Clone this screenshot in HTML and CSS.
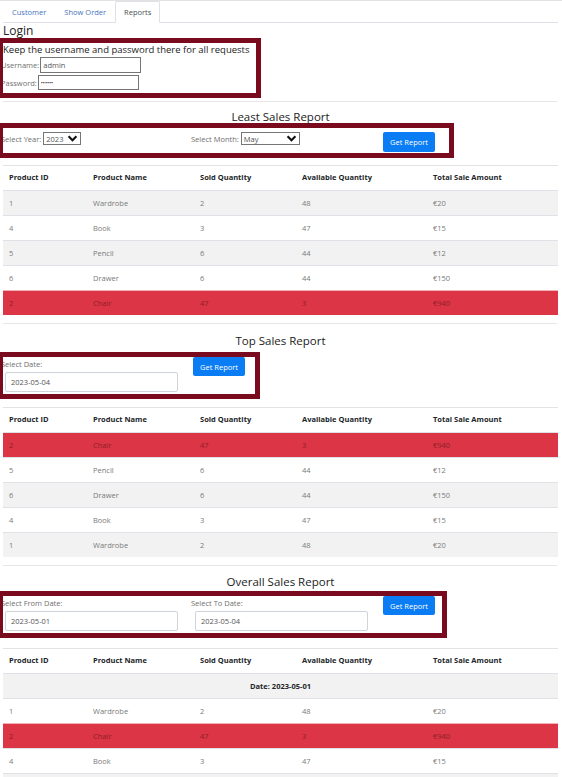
FILE: index.html
```html
<!DOCTYPE html>
<html>
<head>
<meta charset="utf-8">
<link rel="stylesheet" href="styles.css">
</head>
<body>
<div class="topline"></div>
<div class="page">
  <ul class="tabs">
    <li class="tab">Customer</li>
    <li class="tab">Show Order</li>
    <li class="tab active">Reports</li>
  </ul>

  <h4 class="login-title">Login</h4>
  <div class="frame frame-login">
    <p class="note">Keep the username and password there for all requests</p>
    <div class="field">
      <label class="lbl">Username:</label>
      <input class="txt" type="text" value="admin">
    </div>
    <div class="field field-pass">
      <label class="lbl">Password:</label>
      <input class="txt txt-pass" type="password" value="admin1">
    </div>
  </div>

  <hr class="sep sep-1">
  <h3 class="section-title t-least">Least Sales Report</h3>
  <div class="frame frame-least">
    <div class="inline-field">
      <span class="lbl">Select Year:</span>
      <span class="sel sel-year">2023<svg class="chev" viewBox="0 0 12 8" width="11" height="7"><polyline points="1.5,1.5 6,6 10.5,1.5" fill="none" stroke="#111" stroke-width="2.4"/></svg></span>
    </div>
    <div class="inline-field">
      <span class="lbl">Select Month:</span>
      <span class="sel sel-month">May<svg class="chev" viewBox="0 0 12 8" width="11" height="7"><polyline points="1.5,1.5 6,6 10.5,1.5" fill="none" stroke="#111" stroke-width="2.4"/></svg></span>
    </div>
    <div><button class="btn btn-least">Get Report</button></div>
  </div>

  <table class="report report-least">
    <colgroup><col class="c1"><col class="c2"><col class="c3"><col class="c4"><col class="c5"></colgroup>
    <thead>
      <tr><th>Product ID</th><th>Product Name</th><th>Sold Quantity</th><th>Available Quantity</th><th>Total Sale Amount</th></tr>
    </thead>
    <tbody>
      <tr class="odd"><td>1</td><td>Wardrobe</td><td>2</td><td>48</td><td>€20</td></tr>
      <tr><td>4</td><td>Book</td><td>3</td><td>47</td><td>€15</td></tr>
      <tr class="odd"><td>5</td><td>Pencil</td><td>6</td><td>44</td><td>€12</td></tr>
      <tr><td>6</td><td>Drawer</td><td>6</td><td>44</td><td>€150</td></tr>
      <tr class="danger"><td>2</td><td>Chair</td><td>47</td><td>3</td><td>€940</td></tr>
    </tbody>
  </table>

  <hr class="sep">
  <h3 class="section-title t-top">Top Sales Report</h3>
  <div class="frame frame-top">
    <div class="stack-field">
      <span class="lbl">Select Date:</span>
      <input class="date" type="text" value="2023-05-04">
    </div>
    <div><button class="btn">Get Report</button></div>
  </div>

  <table class="report report-top">
    <colgroup><col class="c1"><col class="c2"><col class="c3"><col class="c4"><col class="c5"></colgroup>
    <thead>
      <tr><th>Product ID</th><th>Product Name</th><th>Sold Quantity</th><th>Available Quantity</th><th>Total Sale Amount</th></tr>
    </thead>
    <tbody>
      <tr class="danger"><td>2</td><td>Chair</td><td>47</td><td>3</td><td>€940</td></tr>
      <tr><td>5</td><td>Pencil</td><td>6</td><td>44</td><td>€12</td></tr>
      <tr class="odd"><td>6</td><td>Drawer</td><td>6</td><td>44</td><td>€150</td></tr>
      <tr><td>4</td><td>Book</td><td>3</td><td>47</td><td>€15</td></tr>
      <tr class="odd"><td>1</td><td>Wardrobe</td><td>2</td><td>48</td><td>€20</td></tr>
    </tbody>
  </table>

  <hr class="sep">
  <h3 class="section-title t-overall">Overall Sales Report</h3>
  <div class="frame frame-overall">
    <div class="stack-field">
      <span class="lbl">Select From Date:</span>
      <input class="date" type="text" value="2023-05-01">
    </div>
    <div class="stack-field">
      <span class="lbl">Select To Date:</span>
      <input class="date" type="text" value="2023-05-04">
    </div>
    <div><button class="btn">Get Report</button></div>
  </div>

  <table class="report report-overall">
    <colgroup><col class="c1"><col class="c2"><col class="c3"><col class="c4"><col class="c5"></colgroup>
    <thead>
      <tr><th>Product ID</th><th>Product Name</th><th>Sold Quantity</th><th>Available Quantity</th><th>Total Sale Amount</th></tr>
    </thead>
    <tbody>
      <tr class="odd date-row"><th colspan="5">Date: 2023-05-01</th></tr>
      <tr><td>1</td><td>Wardrobe</td><td>2</td><td>48</td><td>€20</td></tr>
      <tr class="danger"><td>2</td><td>Chair</td><td>47</td><td>3</td><td>€940</td></tr>
      <tr><td>4</td><td>Book</td><td>3</td><td>47</td><td>€15</td></tr>
      <tr class="odd date-row"><th colspan="5">Date: 2023-05-02</th></tr>
    </tbody>
  </table>
</div>
</body>
</html>
```

FILE: styles.css
```css
* { box-sizing: border-box; }

html, body {
  margin: 0;
  padding: 0;
  background: #fff;
}

body {
  font-family: "Open Sans", "Noto Sans", sans-serif;
  font-size: 7.5px;
  line-height: 12px;
  color: #212529;
  overflow: hidden;
}

.topline {
  height: 1px;
  background: #e2e2e2;
}

.page {
  padding: 0 4px 0 3px;
}

/* tabs */
.tabs {
  display: flex;
  list-style: none;
  margin: 0;
  padding: 0;
  border-bottom: 1px solid #dee2e6;
}

.tab {
  padding: 4px 8px;
  line-height: 12px;
  border: 1px solid transparent;
  border-radius: 2px 2px 0 0;
  margin-bottom: -1px;
  color: #4674bd;
}

.tab.active {
  color: #495057;
  background: #fff;
  border-color: #dee2e6 #dee2e6 #fff;
}

/* login */
.login-title {
  margin: 1px 0 0;
  font-size: 12px;
  line-height: 14px;
  font-weight: 400;
  color: #222;
}

.frame {
  border: 5px solid #7a0a1e;
  margin-left: -5px;
  overflow: hidden;
  background: #fff;
}

.frame-login {
  width: 263px;
  height: 60px;
}

.note {
  margin: 0;
  font-size: 9.5px;
  line-height: 13px;
  color: #222;
  white-space: nowrap;
}

.field {
  display: flex;
  align-items: center;
  margin-top: 1px;
  height: 16px;
}

.field-pass {
  margin-top: 2px;
  height: 15px;
}

.lbl {
  color: #6f6f6f;
  font-size: 7.5px;
  line-height: 12px;
  margin-left: -2px;
  white-space: nowrap;
}

.txt {
  width: 101px;
  height: 100%;
  border: 1px solid #767676;
  border-radius: 0;
  padding: 0 2px;
  margin: 0 0 0 1px;
  font-family: inherit;
  font-size: 7.5px;
  color: #555;
  outline: none;
}

.txt-pass { font-size: 5.5px; color: #222; }

/* separators */
.sep {
  border: 0;
  border-top: 1px solid #e6e6e6;
  margin: 0;
  width: 554px;
}

.sep-1 { margin-top: 3px; }

.section-title {
  margin: 0;
  font-size: 11.5px;
  line-height: 15px;
  font-weight: 400;
  text-align: center;
  color: #222;
}

.t-least { margin-top: 7px; margin-bottom: -1px; }
.t-top { margin-top: 9px; margin-bottom: 4px; }
.t-overall { margin-top: 8px; margin-bottom: 2px; }

/* least frame */
.frame-least {
  width: 456px;
  height: 35px;
  padding-top: 4px;
  display: grid;
  grid-template-columns: 190px 190px auto;
  align-items: start;
}

.inline-field {
  display: flex;
  align-items: center;
  height: 13px;
}

.inline-field .lbl { margin-right: 2px; }

.sel {
  display: flex;
  align-items: center;
  justify-content: space-between;
  height: 13px;
  border: 1px solid #767676;
  padding: 0 2px 0 2px;
  color: #555;
  font-size: 7.5px;
}

.sel-year { width: 38px; }
.sel-month { width: 59px; }

.chev { display: block; }

.btn {
  display: block;
  height: 19px;
  width: 52px;
  padding: 0;
  border: 0;
  border-radius: 2px;
  background: #0a7cf4;
  color: #fff;
  font-family: inherit;
  font-size: 7.5px;
  line-height: 12px;
}

.btn-least { height: 20px; }

/* top / overall frames */
.frame-top {
  width: 262px;
  height: 47px;
  display: grid;
  grid-template-columns: 190px auto;
}

.frame-overall {
  width: 449px;
  height: 47px;
  display: grid;
  grid-template-columns: 190px 190px auto;
}

.stack-field {
  display: flex;
  flex-direction: column;
  align-items: flex-start;
}

.stack-field .lbl { margin-top: 1px; }

.date {
  margin: 2px 0 0 2px;
  width: 173px;
  height: 20px;
  border: 1px solid #ced4da;
  border-radius: 2px;
  padding: 0 5px;
  font-family: inherit;
  font-size: 7.5px;
  color: #555;
  outline: none;
}

/* tables */
.report {
  width: 555px;
  border-collapse: collapse;
  table-layout: fixed;
  margin-bottom: 8px;
}

.report-least { margin-top: 7px; }
.report-top { margin-top: 8px; }
.report-overall { margin-top: 10px; }

.c1 { width: 84px; }
.c2 { width: 107px; }
.c3 { width: 102px; }
.c4 { width: 131px; }
.c5 { width: 131px; }

.report th,
.report td {
  padding: 6px 6px;
  line-height: 12px;
  font-size: 7.5px;
  text-align: left;
  border-top: 1px solid #dee2e6;
  white-space: nowrap;
}

.report thead th {
  font-weight: 700;
  color: #212529;
  padding-top: 5px;
  padding-bottom: 7px;
  border-top-color: #e3e3e3;
  border-bottom: 1px solid #dee2e6;
}

.report td {
  color: #7a7a7a;
}

.report tr.odd {
  background: #f2f2f2;
}

.report tr.danger {
  background: #dc3545;
}

.report tr.danger td {
  color: #8e1f2b;
  border-top-color: #f1b0b7;
}

.report .date-row th {
  text-align: center;
  font-weight: 700;
  color: #212529;
}
```
